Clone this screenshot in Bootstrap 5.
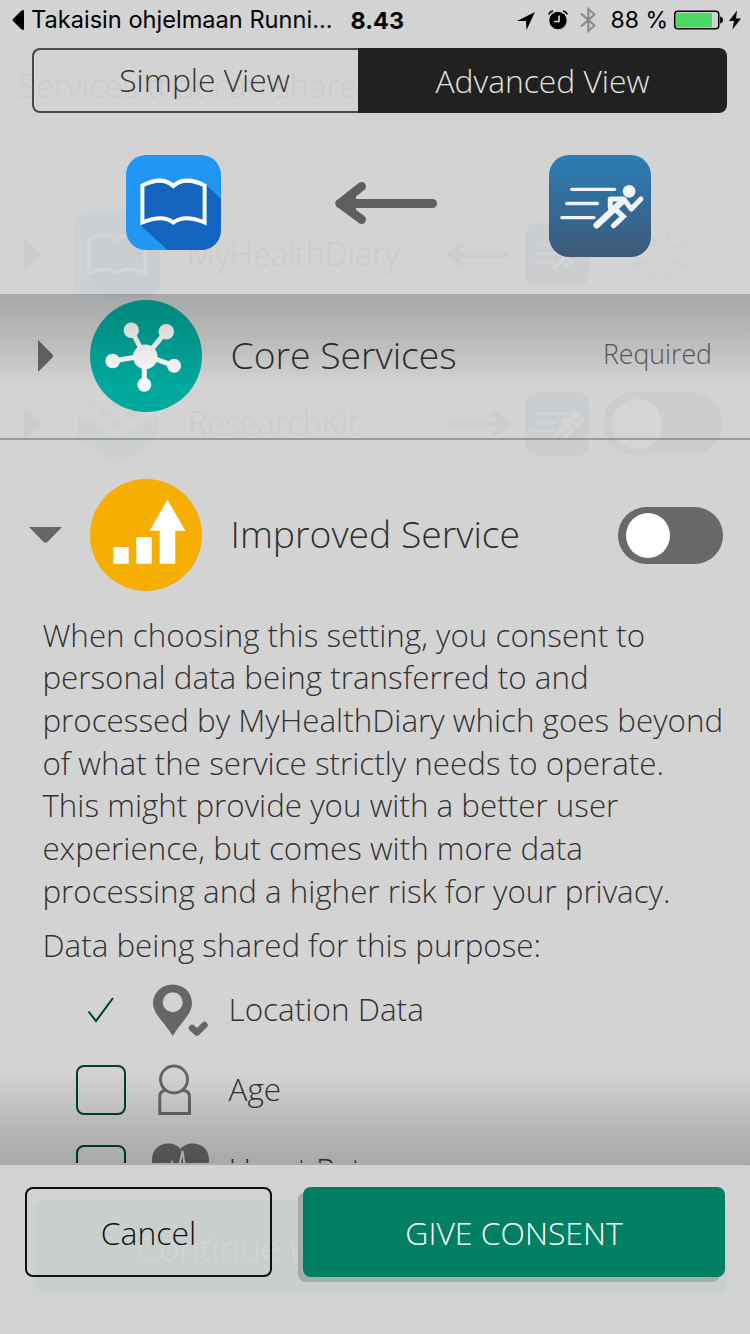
<!DOCTYPE html>
<html lang="en">
<head>
<meta charset="utf-8">
<meta name="viewport" content="width=device-width, initial-scale=1">
<title>Consent</title>
<link rel="stylesheet" href="https://cdn.jsdelivr.net/npm/bootstrap@5.3.0/dist/css/bootstrap.min.css">
<script src="https://cdn.jsdelivr.net/npm/bootstrap@5.3.0/dist/js/bootstrap.bundle.min.js"></script>
<style>
  body { font-family: "Open Sans", sans-serif; font-weight: 300; color: #333; background: #d3d3d3; }
  svg { display: block; flex: none; }
  .screen { width: 750px; height: 1334px; }
  /* dimmed page behind the dialog */
  .under { inset: 0; opacity: .045; font-size: 32.300px; color: #333; z-index: 0; white-space: nowrap; }
  .under-title { height: 170px; padding: 61px 0 0 18px; font-size: 32.800px; }
  .under-row { height: 169px; padding-left: 24px; }
  .under-row svg { color: #666; fill: #666; }
  .under-name { width: 258px; margin-left: 27px; padding-bottom: 2px; }
  .under-btn { margin: 692px 23px 0 35px; height: 93px; background: #007f62; border-radius: 8px; color: #fff; font-size: 35px; padding: 3px 0 0 102px; box-shadow: -5px 5px 0 rgba(0,0,0,.1); }
  .front { z-index: 1; }
  .status { height: 48px; font-family: Inter, sans-serif; font-weight: 400; font-size: 23.600px; color: #000; padding: 0 9px 8px 12px; white-space: nowrap; }
  .st-time { font-size: 23.400px; }
  .seg { height: 65px; margin: 0 23px 0 32px; font-size: 31.800px; }
  .seg-on { background: #212121; color: #e2e2e2; width: 369px; border-radius: 0 8px 8px 0; }
  .seg-off { width: 326px; border: 2px solid #4a4a4a; border-right: 0; border-radius: 8px 0 0 8px; padding: 0 0 1px 17px; }
  .apps { height: 181px; padding: 42px 99px 0 126px; }
  .pane { height: 871px; }
  .pane-in { height: 869px; }
  .pane::before, .pane::after { content: ""; position: absolute; left: 0; right: 0; height: 92px; pointer-events: none; }
  .pane::before { top: 0; background: linear-gradient(rgba(0,0,0,.205), rgba(0,0,0,.13) 45%, rgba(0,0,0,0)); }
  .pane::after { bottom: 0; background: linear-gradient(rgba(0,0,0,0), rgba(0,0,0,.13) 55%, rgba(0,0,0,.205)); }
  .svc { padding-right: 27px; }
  .svc-core { height: 146px; padding-top: 6px; border-bottom: 2px solid #999; }
  .svc-imp { height: 112px; margin-top: 39px; }
  .svc-mark { width: 90px; }
  .svc-name { font-size: 37.300px; margin-left: 28.500px; color: #2f2f2f; padding-bottom: 3px; }
  .req { font-size: 26.700px; color: #5c5c5c; margin-right: 11px; padding-bottom: 3px; }
  .switch-off { width: 105px; height: 57px; border-radius: 29px; background: #696969; padding: 6px 8px; }
  .switch-off i { display: block; width: 44px; height: 45px; border-radius: 50%; background: #fff; }
  .copy { font-size: 31.360px; line-height: 42.700px; margin: 22.500px 0 0 42.400px; white-space: nowrap; }
  .copy p { margin: 0 0 12px; }
  .items { margin-top: -9.500px; }
  .item-row { height: 80px; padding-left: 76px; font-size: 31.500px; }
  .item-row .lbl { padding-bottom: 3px; }
  .box { width: 50px; height: 50px; border: 2px solid #00402f; border-radius: 8px; }
  .ico { width: 60px; margin: 0 17.500px 0 25px; }
  .foot { height: 169px; padding: 22px 25px 0; gap: 31px; }
  .foot .btn { height: 90px; border-radius: 8px; font-size: 31.900px; font-weight: 300; padding: 2px 0 0; }
  .btn-no { width: 247px; border: 2px solid #111; color: #111; }
  .btn-yes, .btn-yes:hover { width: 422px; border: 0; background: #007f62; color: #fff; box-shadow: -5px 5px 0 #a9a9a9; }
</style>
</head>
<body>
<svg width="0" height="0" class="position-absolute">
  <defs>
    <linearGradient id="runbg" x1="0" y1="0" x2="0" y2="1"><stop offset="0" stop-color="#2b7db6"/><stop offset="1" stop-color="#3d5978"/></linearGradient>
    <symbol id="book" viewBox="0 0 95 95">
      <clipPath id="bk"><rect width="95" height="95" rx="20"/></clipPath>
      <g clip-path="url(#bk)">
        <rect width="95" height="95" fill="#2196f3"/>
        <path d="M80 29.500 95 44V95H41.700L14.500 70.500 47 40Z" fill="#1565c0"/>
        <path d="M16.400 30.500Q36 20.500 47.300 31Q58.500 20.500 78.600 30.500V67.500Q58 59 47.300 67.500Q37 59 16.400 67.500Z" fill="#1565c0" stroke="#fff" stroke-width="4"/>
      </g>
    </symbol>
    <symbol id="run" viewBox="0 0 101 101">
      <rect width="101" height="101" rx="20" fill="url(#runbg)"/>
      <g fill="none" stroke="#eef3f7" stroke-linecap="round">
        <path d="M22.500 34H65M17.500 48H48M12.700 62H44.500" stroke-width="3.300"/>
        <path d="M60.700 52V43.500H74L81.500 53.500 91 43.500" stroke-width="5" stroke-linejoin="round"/>
        <path d="M47.300 69.500 73 45.500" stroke-width="6.500"/>
        <path d="M66.500 54.500 73.500 61 64 70" stroke-width="5.200"/>
      </g>
      <circle cx="79.300" cy="36" r="6.300" fill="#eef3f7"/>
    </symbol>
    <symbol id="arrow" viewBox="0 0 103 42">
      <path d="M6 21.500H98.500" stroke="currentColor" stroke-width="9" stroke-linecap="round"/>
      <path d="M27.500 4.500 6 21.500 27.500 37.500" fill="none" stroke="currentColor" stroke-width="9" stroke-linecap="round" stroke-linejoin="round"/>
      <path d="M4 21.500 22 10V33Z" fill="currentColor"/>
    </symbol>
  </defs>
</svg>
<div class="screen position-relative overflow-hidden">
  <div class="under position-absolute" aria-hidden="true">
    <div class="under-title">Services that can share</div>
    <div class="under-row d-flex align-items-center">
      <svg width="17" height="36"><path d="M0 0 17 18 0 36Z"/></svg>
      <svg width="86" height="86" style="margin-left:33px"><use href="#book"/></svg>
      <span class="under-name">MyHealthDiary</span>
      <svg width="65" height="27"><use href="#arrow"/></svg>
      <svg width="64" height="64" style="margin-left:15px"><use href="#run"/></svg>
      <svg width="74" height="74" viewBox="-37 -37 74 74" style="margin-left:34px" stroke="#999" stroke-width="4.500"><path d="M6-14 12-28M14-6 28-12M14 6 28 12M6 14 12 28M-6 14-12 28M-14 6-28 12M-14-6-28-12M-6-14-12-28"/></svg>
    </div>
    <div class="under-row d-flex align-items-center">
      <svg width="17" height="36"><path d="M0 0 17 18 0 36Z"/></svg>
      <svg width="80" height="80" viewBox="0 0 80 80" style="margin-left:37px;margin-right:3px">
        <path d="M0 43 40 20 80 43V54Q45 80 40 80Q35 80 0 54Z" fill="#6a9a88"/>
        <path d="M0 32 40 60 80 32V43Q45 68 40 68Q35 68 0 43Z" fill="#4a9a70"/>
        <path d="M3 16 35-3H45L77 16Q83 22 76 29L45 53Q40 56 35 53L4 29Q-3 22 3 16Z" fill="#e4e4e4"/>
        <g fill="#888"><ellipse cx="14" cy="20" rx="6" ry="4"/><ellipse cx="27" cy="30" rx="6" ry="4"/><ellipse cx="40" cy="40" rx="6" ry="4"/><ellipse cx="40" cy="20" rx="6" ry="4"/><ellipse cx="53" cy="30" rx="6" ry="4"/></g>
      </svg>
      <span class="under-name">ResearchKit</span>
      <svg width="65" height="27"><use href="#arrow" transform="translate(65 0) scale(-1 1)"/></svg>
      <svg width="64" height="64" style="margin-left:14px"><use href="#run"/></svg>
      <svg width="119" height="63" style="margin-left:14px"><rect width="119" height="63" rx="31.500" fill="#555"/><circle cx="34" cy="32" r="25" fill="#fff"/></svg>
    </div>
    <div class="under-btn d-flex align-items-center">Continue with</div>
  </div>

  <div class="front position-relative d-flex flex-column">
    <div class="status d-flex align-items-center">
      <svg width="13" height="22"><path d="M12 1V21Q10 21 9 20L1 12Q0 11 1 10L9 2Q10 1 12 1Z"/></svg>
      <span class="st-back" style="margin-left:6px">Takaisin ohjelmaan Runni...</span>
      <span class="st-time fw-bold" style="margin-left:18px;padding-top:1px">8.43</span>
      <svg width="18" height="19" class="ms-auto"><path d="M18 1 9.500 19 9 10H0Z"/></svg>
      <svg width="20" height="20" style="margin-left:13px"><circle cx="10" cy="10.500" r="8.700"/><path d="M.8 4.500Q1.500 1.800 5 1M19.200 4.500Q18.500 1.800 15 1" fill="none" stroke="#000" stroke-width="1.500"/><path d="M11 5.500V11.500H6" fill="none" stroke="#d3d3d3" stroke-width="1.700"/></svg>
      <svg width="17" height="26" style="margin-left:12px" fill="none" stroke="#888" stroke-width="2"><path d="M1 6.500 14.500 18.500 8.300 24V2L14.500 7.500 1 19.500"/></svg>
      <span class="st-pct" style="margin-left:13px;padding-top:1px;font-size:23px">88 %</span>
      <svg width="49" height="20" style="margin-left:6px"><rect x=".75" y="1.250" width="44" height="17.500" rx="3" fill="none" stroke="#000" stroke-width="1.500"/><rect x="2" y="3" width="36" height="14.500" rx="1" fill="#4cd964"/><path d="M46 6.500Q49 7 49 10T46 13.500Z"/></svg>
      <svg width="12" height="20" style="margin-left:6px"><path d="M8 .5 0 11H5L3.500 19.500 12 8.500H7Z"/></svg>
    </div>
    <div class="seg d-flex">
      <div class="seg-off d-flex align-items-center justify-content-center"><span>Simple View</span></div>
      <div class="seg-on d-flex align-items-center justify-content-center"><span>Advanced View</span></div>
    </div>
    <div class="apps d-flex justify-content-between align-items-start">
      <svg width="95" height="95"><use href="#book"/></svg>
      <svg width="103" height="42" style="color:#5e5e5e;margin-top:27px"><use href="#arrow"/></svg>
      <svg width="102" height="102"><use href="#run"/></svg>
    </div>

    <main class="pane position-relative">
      <div class="pane-in overflow-hidden">
        <div class="svc svc-core d-flex">
          <div class="d-flex align-items-center w-100" style="height:112px">
            <div class="svc-mark"><svg width="16" height="32" style="margin-left:38px" fill="#666"><path d="M0 0 15 15V17L0 32Z"/></svg></div>
            <svg width="112" height="112"><circle cx="56" cy="56" r="56" fill="#00a99d"/>
              <path d="M41.300 30.300 55.300 56.700 76.300 31.700M22.700 61 55.300 55.500 84 65.700M54.300 84.700V56" fill="none" stroke="#fff" stroke-width="5"/>
              <g fill="#fff"><circle cx="55.300" cy="56.700" r="12.300"/><circle cx="41.300" cy="30.300" r="7.700"/><circle cx="76.300" cy="31.700" r="7.700"/><circle cx="22.700" cy="61" r="7.300"/><circle cx="84" cy="65.700" r="7"/><circle cx="54.300" cy="84.700" r="7"/></g>
            </svg>
            <span class="svc-name">Core Services</span>
            <span class="req ms-auto">Required</span>
          </div>
        </div>
        <div class="svc svc-imp d-flex align-items-center">
          <div class="svc-mark"><svg width="33" height="16" style="margin-left:29px" fill="#666"><path d="M0 0H33L18 15.500H15Z"/></svg></div>
          <svg width="112" height="112"><circle cx="56" cy="56" r="56" fill="#f6ae00"/><path fill="#fff" d="M23.300 68H38.700V84.700H23.300ZM46.300 58H61.700V84.700H46.300ZM77.500 20.500 95.300 51.700H85.300V84.700H69.700V51.700H59.700Z"/></svg>
          <span class="svc-name">Improved Service</span>
          <span class="switch-off ms-auto" role="switch" aria-checked="false"><i></i></span>
        </div>
        <div class="copy">
          <p>When choosing this setting, you consent to<br>personal data being transferred to and<br>processed by MyHealthDiary which goes beyond<br>of what the service strictly needs to operate.<br>This might provide you with a better user<br>experience, but comes with more data<br>processing and a higher risk for your privacy.</p>
          <p>Data being shared for this purpose:</p>
        </div>
        <div class="items">
          <div class="item-row d-flex align-items-center">
            <svg width="50" height="50" fill="none" stroke="#00402f" stroke-width="2"><path d="M12.500 26.500 20 36 37 13"/></svg>
            <svg class="ico" height="54" viewBox="0 0 60 54" fill="#666"><path fill-rule="evenodd" d="M21.700 1.500C33 1.500 41 10 41 20.500C41 31 30 39 21.700 53C13.500 39 2 31 2 20.500C2 10 10.500 1.500 21.700 1.500ZM21.700 9.300A10 10 0 1 0 21.700 29.300A10 10 0 1 0 21.700 9.300Z"/><path d="M41 45 46 49.500 53.500 42" fill="none" stroke="#666" stroke-width="6.500" stroke-linecap="round" stroke-linejoin="round"/></svg>
            <span class="lbl">Location Data</span>
          </div>
          <div class="item-row d-flex align-items-center">
            <span class="box"></span>
            <svg class="ico" height="54" viewBox="0 0 60 54" fill="none" stroke="#666" stroke-width="3"><circle cx="23" cy="16.500" r="13.500"/><path d="M15 27.500Q8.800 27.500 8.800 33.500V50.500H38.500V33.500Q38.500 27.500 31.500 27.500"/></svg>
            <span class="lbl">Age</span>
          </div>
          <div class="item-row d-flex align-items-center">
            <span class="box"></span>
            <svg class="ico" height="54" viewBox="0 0 60 54" fill="#666"><path d="M29.500 6C36 -3 58 -2 58 17C58 31 42 40 29.500 53C17 40 1 31 1 17C1 -2 23 -3 29.500 6Z"/><path d="M4 31H15L21 19.500 25 38 31.500 8 35 31H54" fill="none" stroke="#d3d3d3" stroke-width="2"/></svg>
            <span class="lbl">Heart Rate</span>
          </div>
        </div>
      </div>
    </main>
    <footer class="foot d-flex align-items-start">
      <button type="button" class="btn btn-no">Cancel</button>
      <button type="button" class="btn btn-yes">GIVE CONSENT</button>
    </footer>
  </div>
</div>
</body>
</html>
